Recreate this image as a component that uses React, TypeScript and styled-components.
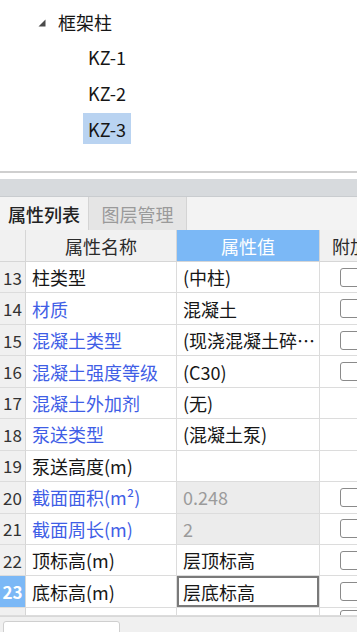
import React from "react";
import styled, { createGlobalStyle } from "styled-components";

const Global = createGlobalStyle`
  html, body { margin: 0; padding: 0; background: #ffffff; }
  body { font-family: "Noto Sans CJK SC", "Microsoft YaHei", sans-serif; color: #222; overflow: hidden; }
  * { box-sizing: border-box; }
`;

const Page = styled.div`
  width: 357px;
  height: 632px;
  display: flex;
  flex-direction: column;
  overflow: hidden;
`;

const TreePane = styled.div`
  height: 171px;
  background: #fff;
  padding-top: 4px;
  display: flex;
  flex-direction: column;
  flex-shrink: 0;
`;

const TreeRow = styled.div<{ $indent: number }>`
  height: 35.67px;
  display: flex;
  align-items: center;
  padding-left: ${(p) => p.$indent}px;
  font-size: 18px;
  color: #161616;
`;

const Caret = styled.svg`
  width: 8px;
  height: 8px;
  margin-right: 12px;
  margin-top: 3px;
`;

const Item = styled.span<{ $selected?: boolean }>`
  display: flex;
  align-items: center;
  height: 31px;
  padding: 0 5px;
  margin-left: -5px;
  background: ${(p) => (p.$selected ? "#b9d3f1" : "transparent")};
`;

const Divider = styled.div`
  height: 2px;
  background: #cfcfcf;
  flex-shrink: 0;
`;

const Gap = styled.div`
  height: 6px;
  background: #fff;
  flex-shrink: 0;
`;

const Band = styled.div`
  height: 18px;
  background: #d7dadd;
  border-bottom: 1px solid #c9cccf;
  flex-shrink: 0;
`;

const Tabs = styled.div`
  height: 33px;
  display: flex;
  background: #f3f3f3;
  flex-shrink: 0;
`;

const Tab = styled.div<{ $active?: boolean; $w: number }>`
  width: ${(p) => p.$w}px;
  display: flex;
  align-items: center;
  justify-content: center;
  font-size: 18px;
  color: ${(p) => (p.$active ? "#222" : "#9a9a9a")};
  background: ${(p) => (p.$active ? "#f3f3f3" : "#e5e5e5")};
  border-right: 1px solid #d4d4d4;
  ${(p) => (p.$active ? "font-weight: 500;" : "")}
`;

const Grid = styled.div`
  display: grid;
  grid-template-columns: 26px 151px 143px 60px;
  width: 380px;
  flex-shrink: 0;
  background: #fff;
`;

const HeadCell = styled.div<{ $hl?: boolean; $left?: boolean }>`
  height: 32px;
  display: flex;
  align-items: center;
  justify-content: ${(p) => (p.$left ? "flex-start" : "center")};
  padding-left: ${(p) => (p.$left ? "12px" : "0")};
  font-size: 18px;
  color: ${(p) => (p.$hl ? "#ffffff" : "#2a2a2a")};
  background: ${(p) => (p.$hl ? "#7bb8f6" : "#f1f1f1")};
  border-right: 1px solid #d6d6d6;
  border-bottom: 1px solid #d6d6d6;
  white-space: nowrap;
  overflow: hidden;
`;

const NumCell = styled.div<{ $sel?: boolean; $h: number }>`
  height: ${(p) => p.$h}px;
  display: flex;
  align-items: center;
  justify-content: center;
  font-size: 17px;
  color: ${(p) => (p.$sel ? "#ffffff" : "#333")};
  font-weight: ${(p) => (p.$sel ? 700 : 400)};
  background: ${(p) => (p.$sel ? "#7bb8f6" : "#f0f0f0")};
  border-right: 1px solid #d6d6d6;
  border-bottom: 1px solid #dcdcdc;
  overflow: hidden;
`;

const NameCell = styled.div<{ $blue?: boolean; $h: number }>`
  height: ${(p) => p.$h}px;
  display: flex;
  align-items: center;
  padding-left: 6px;
  font-size: 18px;
  color: ${(p) => (p.$blue ? "#3f5ee6" : "#161616")};
  border-right: 1px solid #dcdcdc;
  border-bottom: 1px solid #dcdcdc;
  white-space: nowrap;
  overflow: hidden;
`;

const ValueCell = styled.div<{ $disabled?: boolean; $editing?: boolean; $h: number }>`
  height: ${(p) => p.$h}px;
  display: flex;
  align-items: center;
  padding-left: 6px;
  padding-right: 1px;
  font-size: 18px;
  color: ${(p) => (p.$disabled ? "#9b9b9b" : "#161616")};
  background: ${(p) => (p.$disabled ? "#ececec" : "#fff")};
  border-right: 1px solid #dcdcdc;
  border-bottom: 1px solid #dcdcdc;
  box-shadow: ${(p) => (p.$editing ? "inset 0 0 0 2px #7a7a7a" : "none")};
  white-space: nowrap;
  overflow: hidden;
`;

const Ellipsis = styled.span`
  overflow: hidden;
  text-overflow: ellipsis;
  white-space: nowrap;
`;

const ExtraCell = styled.div<{ $h: number }>`
  height: ${(p) => p.$h}px;
  display: flex;
  align-items: center;
  padding-left: 20px;
  border-bottom: 1px solid #dcdcdc;
  overflow: hidden;
`;

const Check = styled.span`
  width: 20px;
  height: 19px;
  border: 1.5px solid #8a8a8a;
  border-radius: 3px;
  background: #fff;
  flex-shrink: 0;
`;

const PartialCheck = styled(Check)`
  align-self: flex-end;
  margin-bottom: -14px;
`;

const Footer = styled.div`
  flex: 1;
  background: #f0f0f0;
  border-top: 1px solid #d8d8d8;
  padding: 4px 0 0 3px;
  overflow: hidden;
`;

const FooterButton = styled.div`
  width: 117px;
  height: 30px;
  background: #fff;
  border: 1px solid #cfcfcf;
  border-radius: 3px;
  color: #aaa;
  font-size: 16px;
  padding-left: 26px;
  padding-top: 6px;
`;

type Row = {
  n: number;
  name: string;
  blue?: boolean;
  value: string;
  disabled?: boolean;
  check: boolean;
  ellipsis?: boolean;
};

const rows: Row[] = [
  { n: 13, name: "柱类型", value: "(中柱)", check: true },
  { n: 14, name: "材质", blue: true, value: "混凝土", check: true },
  { n: 15, name: "混凝土类型", blue: true, value: "(现浇混凝土碎石<20)", check: true, ellipsis: true },
  { n: 16, name: "混凝土强度等级", blue: true, value: "(C30)", check: true },
  { n: 17, name: "混凝土外加剂", blue: true, value: "(无)", check: false },
  { n: 18, name: "泵送类型", blue: true, value: "(混凝土泵)", check: false },
  { n: 19, name: "泵送高度(m)", value: "", check: false },
  { n: 20, name: "截面面积(m²)", blue: true, value: "0.248", disabled: true, check: true },
  { n: 21, name: "截面周长(m)", blue: true, value: "2", disabled: true, check: true },
  { n: 22, name: "顶标高(m)", value: "层顶标高", check: true },
  { n: 23, name: "底标高(m)", value: "层底标高", check: true },
];

const RH = 31.45;

export default function App() {
  return (
    <Page>
      <Global />
      <TreePane>
        <TreeRow $indent={38}>
          <Caret viewBox="0 0 8 8">
            <path d="M7.5 0.5 L7.5 7.5 L0.5 7.5 Z" fill="#4a4a4a" />
          </Caret>
          框架柱
        </TreeRow>
        <TreeRow $indent={88}>
          <Item>KZ-1</Item>
        </TreeRow>
        <TreeRow $indent={88}>
          <Item>KZ-2</Item>
        </TreeRow>
        <TreeRow $indent={88}>
          <Item $selected>KZ-3</Item>
        </TreeRow>
      </TreePane>
      <Divider />
      <Gap />
      <Band />
      <Tabs>
        <Tab $active $w={89}>属性列表</Tab>
        <Tab $w={98}>图层管理</Tab>
      </Tabs>
      <Grid>
        <HeadCell />
        <HeadCell>属性名称</HeadCell>
        <HeadCell $hl>属性值</HeadCell>
        <HeadCell $left>附加</HeadCell>
        {rows.map((r) => (
          <React.Fragment key={r.n}>
            <NumCell $h={RH} $sel={r.n === 23}>{r.n}</NumCell>
            <NameCell $h={RH} $blue={r.blue}>{r.name}</NameCell>
            <ValueCell $h={RH} $disabled={r.disabled} $editing={r.n === 23}>
              {r.ellipsis ? <Ellipsis>{r.value}</Ellipsis> : r.value}
            </ValueCell>
            <ExtraCell $h={RH}>{r.check && <Check />}</ExtraCell>
          </React.Fragment>
        ))}
        <NumCell $h={8} />
        <NameCell $h={8} />
        <ValueCell $h={8} />
        <ExtraCell $h={8}>
          <PartialCheck />
        </ExtraCell>
      </Grid>
      <Footer>
        <FooterButton>设置比例</FooterButton>
      </Footer>
    </Page>
  );
}
